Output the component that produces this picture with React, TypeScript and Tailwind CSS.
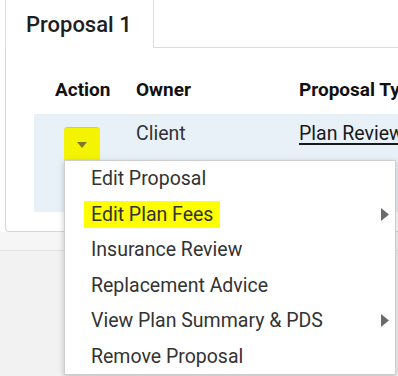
import React from "react";

const items = [
  { label: "Edit Proposal" },
  { label: "Edit Plan Fees", sub: true, marked: true },
  { label: "Insurance Review" },
  { label: "Replacement Advice" },
  { label: "View Plan Summary & PDS", sub: true },
  { label: "Remove Proposal" },
];

function Caret() {
  return (
    <svg width="10" height="6" viewBox="0 0 10 6" className="block">
      <path d="M0 0h10L5 6z" fill="#7a7a2a" />
    </svg>
  );
}

function SubArrow() {
  return (
    <svg width="8" height="13" viewBox="0 0 8 13" className="block">
      <path d="M0 0l8 6.5L0 13z" fill="#6b6b6b" />
    </svg>
  );
}

function ActionMenu() {
  return (
    <div className="absolute left-[64px] top-[160px] w-[332px] border border-[#cfcfcf] bg-white shadow-[0_2px_6px_rgba(0,0,0,0.22)]">
      {items.map((it) => (
        <div key={it.label} className="relative flex h-[35.5px] items-center pl-[26px] pr-[6px]">
          <span
            className={
              it.marked
                ? "-ml-[7px] bg-[#ffff00] px-[7px] py-[3px] text-[19.5px] leading-[21px] text-[#333]"
                : "text-[19.5px] leading-[21px] text-[#333]"
            }
          >
            {it.label}
          </span>
          {it.sub && (
            <span className="ml-auto">
              <SubArrow />
            </span>
          )}
        </div>
      ))}
    </div>
  );
}

export default function App() {
  return (
    <div
      className="relative h-[376px] w-[398px] overflow-hidden bg-[#f2f2f2]"
      style={{ fontFamily: "Roboto, 'Liberation Sans', sans-serif" }}
    >
      <div className="bg-white">
        {/* tab strip */}
        <div className="flex h-[48px] pl-[5px]">
          <div className="flex w-[149px] shrink-0 items-center border-x border-[#dcdcdc] pl-[20px]">
            <span className="text-[22px] font-medium text-[#1e1e1e]">Proposal 1</span>
          </div>
          <div className="flex-1 border-b border-[#dcdcdc]" />
        </div>

        {/* panel */}
        <div className="ml-[5px] rounded-bl-[4px] border-b border-l border-[#d6d6d6] pt-[18px] pb-[19px] pl-[28px]">
          <div className="flex h-[48px] items-center text-[19px] font-bold text-[#111]">
            <div className="w-[102px] shrink-0 pl-[21px]">Action</div>
            <div className="w-[163px] shrink-0">Owner</div>
            <div className="shrink-0 whitespace-nowrap">Proposal Type</div>
          </div>
          <div className="flex h-[98px] items-start bg-[#e9f1f8] text-[19.5px] text-[#333]">
            <div className="w-[102px] shrink-0 pt-[13px] pl-[30px]">
              <div className="flex h-[34px] w-[36px] items-center justify-center rounded-t-[4px] border-t border-[#d9d900] bg-[#f4f400]">
                <Caret />
              </div>
            </div>
            <div className="w-[163px] shrink-0 pt-[9px] leading-[22px]">Client</div>
            <div className="shrink-0 whitespace-nowrap pt-[9px] leading-[22px] text-[#1a1a1a] underline decoration-[1.5px] underline-offset-[3px]">
              Plan Review
            </div>
          </div>
        </div>
      </div>

      <div className="h-[18px] bg-[#f6f6f6]" />
      <div className="border-t border-[#e2e2e2]" />

      <ActionMenu />
    </div>
  );
}
